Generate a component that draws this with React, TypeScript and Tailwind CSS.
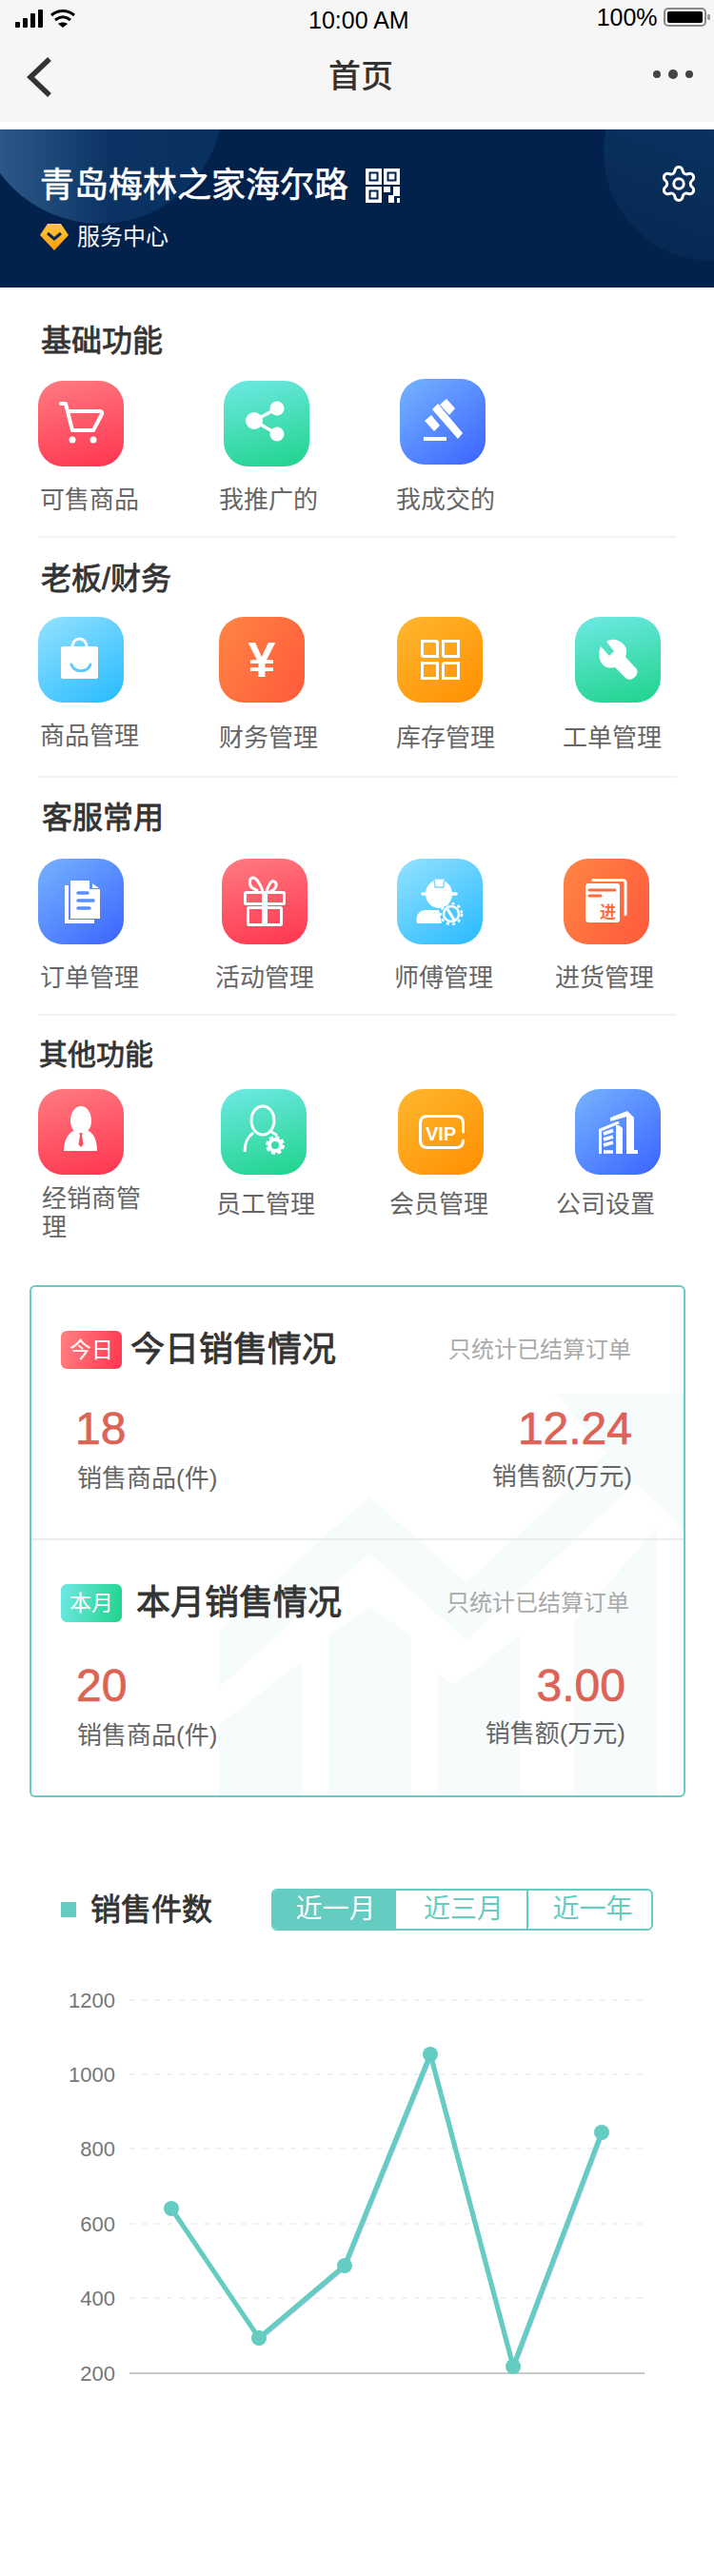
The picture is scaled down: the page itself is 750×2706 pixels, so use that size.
import type { ReactNode } from "react";
import { Settings } from "lucide-react";

const RED = "bg-[linear-gradient(165deg,#ff7b80,#ff3550)]";
const TEAL = "bg-[linear-gradient(165deg,#6ee9e4,#1fd38b)]";
const BLUE = "bg-[linear-gradient(140deg,#75b4ff,#3b63ff)]";
const SKY = "bg-[linear-gradient(145deg,#95e2ff,#26baff)]";
const ORANGE = "bg-[linear-gradient(120deg,#ff8543,#ff593c)]";
const AMBER = "bg-[linear-gradient(140deg,#ffb72f,#ff8f00)]";

function Glyph({ children }: { children: ReactNode }) {
  return (
    <svg width="90" height="90" viewBox="0 0 90 90" fill="none" className="block">
      {children}
    </svg>
  );
}

const CartIcon = (
  <Glyph>
    <path d="M24 24h5l7 28h22l9-17q1-3-2-3H31" stroke="#fff" strokeWidth="4" strokeLinecap="round" strokeLinejoin="round" />
    <circle cx="36" cy="62" r="3.5" fill="#fff" />
    <circle cx="58" cy="62" r="3.5" fill="#fff" />
  </Glyph>
);

const ShareIcon = (
  <Glyph>
    <path d="M32 42 56 29M32 42l24 14" stroke="#fff" strokeWidth="3.5" />
    <circle cx="32" cy="42" r="9" fill="#fff" />
    <circle cx="56" cy="29" r="7.5" fill="#fff" />
    <circle cx="56" cy="56" r="7.5" fill="#fff" />
  </Glyph>
);

const GavelIcon = (
  <Glyph>
    <path d="M34 32l6-6 26 31-5 6zM42 27l7-6 9 10-6 7zM26 44l7-6 9 11-6 6z" fill="#fff" />
    <rect x="25" y="61" width="24" height="4" fill="#fff" />
  </Glyph>
);

const BagIcon = (
  <Glyph>
    <rect x="24" y="31" width="39" height="34" rx="2" fill="#fff" />
    <path d="M36 32c0-12 15-12 15 0" stroke="#fff" strokeWidth="3" />
    <path d="M35 50c3 9 17 9 20 0" stroke="#5ccbff" strokeWidth="3" strokeLinecap="round" />
  </Glyph>
);

const YuanIcon = (
  <Glyph>
    <text x="45" y="63" textAnchor="middle" fontSize="52" fontWeight="700" fill="#fff" fontFamily="Liberation Sans">
      ¥
    </text>
  </Glyph>
);

const GridIcon = (
  <Glyph>
    <g stroke="#fff" strokeWidth="3">
      <path d="M26.500 25.500h14q2 0 2 2v14h-14q-2 0-2-2z" />
      <path d="M48.500 25.500h16v16h-14q-2 0-2-2z" />
      <path d="M26.500 48.500h16v16h-16z" />
      <path d="M50.500 48.500h14v16h-16v-14q0-2 2-2z" />
    </g>
  </Glyph>
);

const WrenchIcon = (
  <Glyph>
    <path
      d="M33 26 41 36 36 41 27 31C24 38 25 47 30 51 34 54 38 54 42 53L53 64C56 67 61 66 64 62 66 59 66 56 64 54L53 42C55 37 54 32 51 29 47 24 38 22 33 26Z"
      fill="#fff"
    />
  </Glyph>
);

const DocIcon = (
  <Glyph>
    <path d="M32 28h-4v40h31v-4H32z" fill="#fff" />
    <path d="M34 23h20v9h11v31H34z" fill="#fff" />
    <path d="M57 26l7 5h-7z" fill="#fff" />
    <path d="M42 36h10M42 44h16M42 52h12" stroke="#5b8dff" strokeWidth="3.500" strokeLinecap="round" />
  </Glyph>
);

const GiftIcon = (
  <Glyph>
    <rect x="24.500" y="35.500" width="41" height="12" rx="1" stroke="#fff" strokeWidth="3" />
    <rect x="27.500" y="51.500" width="35" height="18" rx="1" stroke="#fff" strokeWidth="3" />
    <path d="M45 35v35" stroke="#fff" strokeWidth="6" />
    <path d="M43 34C40 26 36 20 33 20 29 20 28 26 31 30L38 34M47 34C49 28 52 22 55 24 59 26 57 31 54 33L50 35" stroke="#fff" strokeWidth="3" />
  </Glyph>
);

const WorkerIcon = (
  <Glyph>
    <ellipse cx="44" cy="37" rx="14" ry="15" fill="#fff" />
    <path d="M39 21h11l-1 9h-9z" fill="#fff" stroke="#7dd8ff" strokeWidth="1.500" />
    <path d="M27 37h35" stroke="#fff" strokeWidth="3.500" strokeLinecap="round" />
    <path d="M21 68c-2-8 2-14 9-14h14l3 14z" fill="#fff" />
    <circle cx="57" cy="58" r="10" fill="#4fc8ff" />
    <circle cx="57" cy="58" r="8" stroke="#fff" strokeWidth="2.500" />
    <circle cx="57" cy="58" r="11" stroke="#fff" strokeWidth="2.500" strokeDasharray="3 3.500" />
    <path d="M53 53l8 13" stroke="#fff" strokeWidth="3" />
  </Glyph>
);

const StockIcon = (
  <Glyph>
    <path d="M31 22.500h31q3 0 3 3v33" stroke="#fff" strokeWidth="3" strokeLinecap="round" />
    <rect x="23" y="26" width="36" height="41" rx="3" fill="#fff" />
    <path d="M27 33h27M27 39h12" stroke="#ff6a3f" strokeWidth="3" strokeLinecap="round" />
    <text x="46.500" y="62" textAnchor="middle" fontSize="17" fontWeight="700" fill="#ff6a3f" fontFamily="Noto Sans CJK SC">
      进
    </text>
  </Glyph>
);

const DealerIcon = (
  <Glyph>
    <ellipse cx="45" cy="33" rx="11" ry="15" fill="#fff" />
    <path d="M27 65c0-10 4-18 10-21l6 2h4l6-2c6 3 9 11 9 21z" fill="#fff" />
    <path d="M43.500 46h3l-.5 3 1.500 9-2.500 3-2.500-3 1.500-9z" fill="#ff4a5e" />
  </Glyph>
);

const StaffIcon = (
  <Glyph>
    <ellipse cx="44" cy="33" rx="12" ry="15" stroke="#fff" strokeWidth="3" />
    <path d="M34 46c-6 4-9 11-9 20M53 45c2 1 4 2 6 4" stroke="#fff" strokeWidth="3" />
    <circle cx="57" cy="59" r="6" stroke="#fff" strokeWidth="4" />
    <circle cx="57" cy="59" r="8.500" stroke="#fff" strokeWidth="3" strokeDasharray="4 2.700" />
  </Glyph>
);

const VipIcon = (
  <Glyph>
    <path d="M68.500 45V36q0-7.500-7.500-7.500H31q-7.500 0-7.500 7.500v18q0 7.500 7.500 7.500h30q7.500 0 7.500-7.500" stroke="#fff" strokeWidth="3" strokeLinecap="round" />
    <text x="45" y="54" textAnchor="middle" fontSize="20" fontWeight="700" fill="#fff" fontFamily="Liberation Sans">
      VIP
    </text>
  </Glyph>
);

const BuildingIcon = (
  <Glyph>
    <path d="M26.500 68V43L46 35" stroke="#fff" strokeWidth="3" />
    <path d="M30 47l10-3.500M30 53l10-3M30 59l10-3M30 66h10" stroke="#fff" strokeWidth="3.500" />
    <path d="M43 38h3l4 3v27h-7zM37 30l18-7 7 7v34h4v4H54V29l-17 5z" fill="#fff" />
  </Glyph>
);

type Item = {
  label: string;
  icon: ReactNode;
  color: string;
  // cell width sets where the next icon starts, lab nudges the caption under the icon
  cell: string;
  lab: string;
  tile?: string;
};

function Tile({ item }: { item: Item }) {
  return (
    <div className={item.cell}>
      <div className={`h-[90px] w-[90px] rounded-[26px] ${item.color} ${item.tile ?? ""}`}>{item.icon}</div>
      <div className={`text-[26px] leading-[30px] text-[#666] ${item.lab}`}>{item.label}</div>
    </div>
  );
}

function Section({
  title,
  titleClass,
  rowClass,
  items,
}: {
  title: string;
  titleClass: string;
  rowClass: string;
  items: Item[];
}) {
  return (
    <div>
      <h2 className={`leading-[40px] text-[#333] [-webkit-text-stroke:0.8px_#333] ${titleClass}`}>{title}</h2>
      <div className={`flex pl-[40px] ${rowClass}`}>
        {items.map((item) => (
          <Tile key={item.label} item={item} />
        ))}
      </div>
    </div>
  );
}

const basics: Item[] = [
  { label: "可售商品", icon: CartIcon, color: RED, cell: "w-[195px]", lab: "mt-[20px] ml-[2px]" },
  { label: "我推广的", icon: ShareIcon, color: TEAL, cell: "w-[185px]", lab: "mt-[20px] -ml-[5px]" },
  { label: "我成交的", icon: GavelIcon, color: BLUE, cell: "w-[110px]", lab: "mt-[22px] -ml-[4px]", tile: "-mt-[2px]" },
];

const boss: Item[] = [
  { label: "商品管理", icon: BagIcon, color: SKY, cell: "w-[190px]", lab: "mt-[20px] ml-[2px]" },
  { label: "财务管理", icon: YuanIcon, color: ORANGE, cell: "w-[187px]", lab: "mt-[22px] ml-[0px]" },
  { label: "库存管理", icon: GridIcon, color: AMBER, cell: "w-[187px]", lab: "mt-[22px] -ml-[1px]" },
  { label: "工单管理", icon: WrenchIcon, color: TEAL, cell: "w-[110px]", lab: "mt-[22px] -ml-[13px]" },
];

const service: Item[] = [
  { label: "订单管理", icon: DocIcon, color: BLUE, cell: "w-[193px]", lab: "mt-[20px] ml-[2px]" },
  { label: "活动管理", icon: GiftIcon, color: RED, cell: "w-[184px]", lab: "mt-[20px] -ml-[7px]" },
  { label: "师傅管理", icon: WorkerIcon, color: SKY, cell: "w-[175px]", lab: "mt-[20px] -ml-[3px]" },
  { label: "进货管理", icon: StockIcon, color: ORANGE, cell: "w-[110px]", lab: "mt-[20px] -ml-[9px]" },
];

const others: Item[] = [
  { label: "经销商管理", icon: DealerIcon, color: RED, cell: "w-[192px]", lab: "mt-[10px] ml-[4px] w-[106px]" },
  { label: "员工管理", icon: StaffIcon, color: TEAL, cell: "w-[186px]", lab: "mt-[16px] -ml-[5px]" },
  { label: "会员管理", icon: VipIcon, color: AMBER, cell: "w-[186px]", lab: "mt-[16px] -ml-[9px]" },
  { label: "公司设置", icon: BuildingIcon, color: BLUE, cell: "w-[110px]", lab: "mt-[16px] -ml-[20px]" },
];

function SalesBlock(props: {
  tag: string;
  tagColor: string;
  title: string;
  count: string;
  amount: string;
  head: string;
  titleGap: string;
  noteRight: string;
  numbers: string;
  numLeft: string;
  amountRight: string;
}) {
  return (
    <div className={props.head}>
      <div className={`flex h-[40px] items-center pl-[31px] ${props.noteRight}`}>
        <span className={`flex h-[40px] w-[64px] items-center justify-center rounded-[6px] text-[23px] text-white ${props.tagColor}`}>
          {props.tag}
        </span>
        <span className={`text-[36px] leading-[40px] text-[#333] [-webkit-text-stroke:0.9px_#333] ${props.titleGap}`}>{props.title}</span>
        <span className="ml-auto text-[24px] leading-[36px] text-[#aaa]">只统计已结算订单</span>
      </div>
      <div className={`flex justify-between ${props.numbers}`}>
        <div>
          <div className={`text-[48px] leading-[56px] text-[#dc6356] [-webkit-text-stroke:0.7px_#dc6356] ${props.numLeft}`}>
            {props.count}
          </div>
          <div className="mt-[9px] ml-[48px] text-[26px] leading-[30px] text-[#666]">销售商品(件)</div>
        </div>
        <div className={`text-right ${props.amountRight}`}>
          <div className="text-[48px] leading-[56px] text-[#dc6356] [-webkit-text-stroke:0.7px_#dc6356]">{props.amount}</div>
          <div className="mt-[7px] text-[26px] leading-[30px] text-[#666]">销售额(万元)</div>
        </div>
      </div>
    </div>
  );
}

const points = [
  [180, 2320],
  [272, 2456],
  [362, 2380],
  [452, 2158],
  [539, 2486],
  [632, 2240],
];

function SalesChart() {
  const ticks = [
    [1200, 2101],
    [1000, 2179],
    [800, 2257],
    [600, 2336],
    [400, 2414],
  ];
  const line = points.map((p) => p.join(",")).join(" ");
  return (
    <svg width="750" height="440" viewBox="0 2080 750 440" className="mt-[52px] block">
      {ticks.map(([label, y]) => (
        <g key={label}>
          <line x1="136" x2="675" y1={y} y2={y} stroke="#f1f1f1" strokeWidth="2" strokeDasharray="6 7" />
          <text x="121" y={y + 8} textAnchor="end" fontSize="22" fill="#777" fontFamily="Liberation Sans">
            {label}
          </text>
        </g>
      ))}
      <line x1="136" x2="677" y1="2493" y2="2493" stroke="#c8c8c8" strokeWidth="2" />
      <text x="121" y="2501" textAnchor="end" fontSize="22" fill="#777" fontFamily="Liberation Sans">
        200
      </text>
      <polyline points={line} fill="none" stroke="#6f8dff" strokeWidth="4" opacity="0.55" transform="translate(1 1)" />
      <polyline points={line} fill="none" stroke="#64ccc0" strokeWidth="5" />
      {points.map(([x, y]) => (
        <circle key={x} cx={x} cy={y} r="8" fill="#64ccc0" />
      ))}
    </svg>
  );
}

export default function App() {
  return (
    <div className="min-h-[2706px] w-[750px] overflow-hidden bg-white [font-family:'Liberation_Sans','Noto_Sans_CJK_SC',sans-serif]">
      <header className="h-[128px] bg-[#f6f6f6] text-black">
        <div className="flex h-[40px] items-start">
          <svg width="63" height="20" viewBox="0 0 63 20" className="mt-[10px] ml-[16px] block">
            <rect x="0" y="13" width="5" height="6" rx="1" />
            <rect x="8" y="9" width="5" height="10" rx="1" />
            <rect x="16" y="4" width="5" height="15" rx="1" />
            <rect x="24" y="0" width="5" height="19" rx="1" />
            <path d="M38 6c7-6 17-6 24 0" fill="none" stroke="#000" strokeWidth="3" />
            <path d="M42 11c5-4 11-4 16 0" fill="none" stroke="#000" strokeWidth="3" />
            <path d="M45 15c3-2 7-2 10 0l-5 4z" />
          </svg>
          <span className="mt-[7px] ml-[245px] text-[25px] leading-[28px]">10:00 AM</span>
          <span className="mt-[4px] ml-[197px] text-[25px] leading-[28px]">100%</span>
          <svg width="50" height="22" viewBox="0 0 50 22" className="mt-[7px] ml-[6px] block">
            <rect x="1" y="2" width="43" height="18" rx="4" fill="none" stroke="#8a8a8a" strokeWidth="2" />
            <rect x="4" y="5" width="37" height="12" rx="2" fill="#000" />
            <rect x="46" y="8" width="3" height="6" rx="1" fill="#9a9a9a" />
          </svg>
        </div>
        <div className="flex h-[88px] items-start">
          <svg width="30" height="46" viewBox="0 0 30 46" fill="none" className="mt-[18px] ml-[27px] block">
            <path d="M25 4 5 23l20 19" stroke="#333" strokeWidth="5.500" />
          </svg>
          <h1 className="mt-[20px] ml-[288px] text-[34px] leading-[40px] font-medium text-[#333]">首页</h1>
          <div className="mt-[33px] ml-[273px] flex items-center gap-[8px]">
            <span className="h-[8px] w-[8px] rounded-full bg-[#444]" />
            <span className="h-[10px] w-[10px] rounded-full bg-[#444]" />
            <span className="h-[8px] w-[8px] rounded-full bg-[#444]" />
          </div>
        </div>
      </header>

      <section className="relative mt-[8px] h-[166px] overflow-hidden bg-[#02224c] text-white">
        <div className="absolute -top-[161px] -left-[25px] h-[260px] w-[260px] rounded-full bg-[linear-gradient(90deg,#33608f,#0a3363_55%,#08305f)]" />
        <div className="absolute -top-[90px] -right-[112px] h-[228px] w-[228px] rounded-full bg-[linear-gradient(200deg,#0e3a6c,#05274f)]" />
        <div className="relative flex items-start pt-[39px] pl-[42px]">
          <div>
            <div className="flex items-center">
              <span className="text-[36px] leading-[40px] [-webkit-text-stroke:0.6px_#fff]">青岛梅林之家海尔路</span>
              <svg width="36" height="36" viewBox="0 0 36 36" className="ml-[18px] block">
                <path d="M0 0h17v17H0zM19 0h17v17H19zM0 19h17v17H0z" fill="#fff" />
                <path d="M4.500 4.500h8v8h-8zM23.500 4.500h8v8h-8zM4.500 23.500h8v8h-8z" fill="none" stroke="#02224c" strokeWidth="2" />
                <path d="M19 19h7v6h-7zM29 19h7v10h-7zM24 28h6v8h-6zM33 31h3v5h-3z" fill="#fff" />
              </svg>
            </div>
            <div className="mt-[19px] flex items-center">
              <svg width="30" height="28" viewBox="0 0 30 28" className="block">
                <defs>
                  <linearGradient id="gem" x1="0" y1="0" x2="0" y2="1">
                    <stop offset="0" stopColor="#ffc940" />
                    <stop offset="1" stopColor="#ff9a0a" />
                  </linearGradient>
                </defs>
                <path d="M8 0h14l8 12-15 16L0 12z" fill="url(#gem)" />
                <path d="M8 10l7 6 7-6" fill="none" stroke="#0a2a52" strokeWidth="3" />
              </svg>
              <span className="ml-[9px] text-[24px] leading-[30px] text-[#f2f4f8]">服务中心</span>
            </div>
          </div>
          <Settings size={42} strokeWidth={1.7} className="mt-[-3px] ml-auto mr-[16px]" />
        </div>
      </section>

      <Section title="基础功能" titleClass="mt-[36px] ml-[43px] text-[32px]" rowClass="mt-[22px]" items={basics} />
      <div className="mx-[40px] mt-[23px] h-[2px] bg-[#f2f2f2]" />
      <Section title="老板/财务" titleClass="mt-[23px] ml-[43px] text-[32px]" rowClass="mt-[20px]" items={boss} />
      <div className="mx-[40px] mt-[25px] h-[2px] bg-[#f2f2f2]" />
      <Section title="客服常用" titleClass="mt-[22px] ml-[44px] text-[32px]" rowClass="mt-[23px]" items={service} />
      <div className="mx-[40px] mt-[23px] h-[2px] bg-[#f2f2f2]" />
      <Section title="其他功能" titleClass="mt-[21px] ml-[41px] text-[30px]" rowClass="mt-[16px]" items={others} />

      <section className="relative mt-[46px] ml-[31px] h-[538px] w-[689px] overflow-hidden rounded-[6px] border-2 border-[#64ccc0]">
        <svg className="absolute inset-0 block" width="685" height="534" viewBox="33 1352 685 534">
          <path
            d="M583 1464H718V1607L668 1558 490 1723 388 1632 230 1773V1713L388 1572 490 1662 637 1527Z"
            fill="#f6fcfc"
          />
          <path
            d="M230 1812 317 1745V1886H230ZM345 1718 388 1688 432 1718V1886H345ZM460 1758 477 1770 547 1717V1886H460ZM603 1703 690 1605V1886H603Z"
            fill="#f6fcfc"
          />
        </svg>
        <div className="relative">
          <SalesBlock
            tag="今日"
            tagColor="bg-[linear-gradient(100deg,#ff8080,#ff3850)]"
            title="今日销售情况"
            count="18"
            amount="12.24"
            head="h-[264px] pt-[46px]"
            titleGap="ml-[9px]"
            noteRight="pr-[55px]"
            numbers="mt-[35px]"
            numLeft="ml-[46px]"
            amountRight="mr-[54px]"
          />
          <div className="h-[2px] bg-[#e8eeee]" />
          <SalesBlock
            tag="本月"
            tagColor="bg-[linear-gradient(100deg,#6ee9e4,#1fd38b)]"
            title="本月销售情况"
            count="20"
            amount="3.00"
            head="pt-[46px]"
            titleGap="ml-[15px]"
            noteRight="pr-[57px]"
            numbers="mt-[39px]"
            numLeft="ml-[47px]"
            amountRight="mr-[61px]"
          />
        </div>
      </section>

      <div className="mt-[96px] flex h-[44px] items-center pl-[64px]">
        <span className="h-[16px] w-[16px] bg-[#64ccc0]" />
        <h2 className="ml-[15px] text-[32px] leading-[44px] text-[#333] [-webkit-text-stroke:0.8px_#333]">销售件数</h2>
        <div className="ml-[62px] flex h-[44px] w-[401px] overflow-hidden rounded-[6px] border-2 border-[#64ccc0] text-center text-[28px] leading-[40px] text-[#64ccc0]">
          <span className="w-[129px] bg-[#64ccc0] pl-[2px] text-white">近一月</span>
          <span className="w-[139px] border-r-2 border-[#64ccc0] pl-[5px]">近三月</span>
          <span className="flex-1 pl-[6px]">近一年</span>
        </div>
      </div>

      <SalesChart />
    </div>
  );
}
